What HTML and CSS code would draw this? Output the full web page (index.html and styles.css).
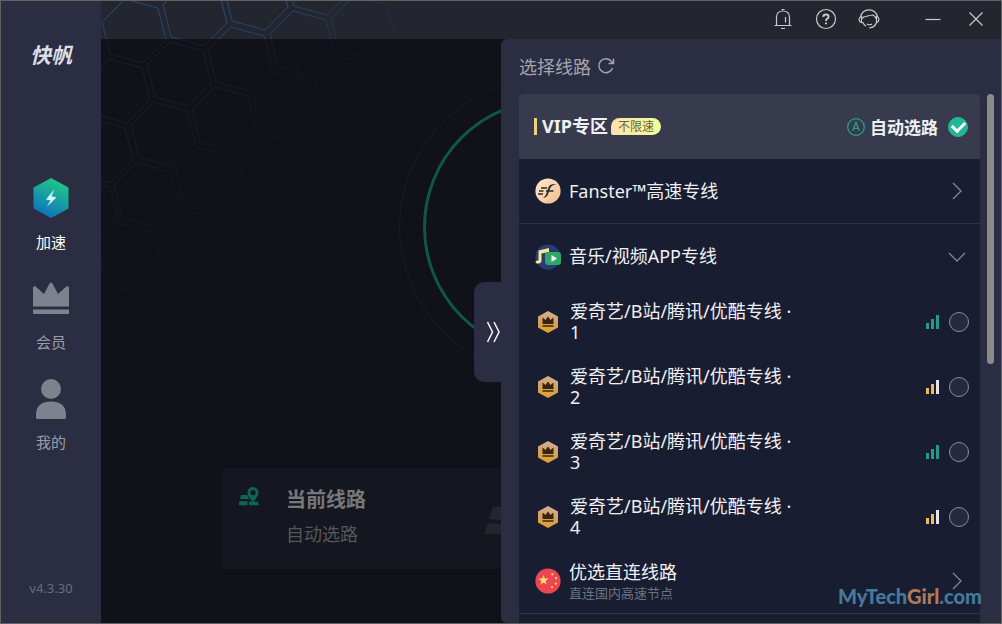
FILE: index.html
```
<!DOCTYPE html>
<html lang="zh-CN">
<head>
<meta charset="utf-8">
<meta name="viewport" content="width=device-width, initial-scale=1">
<title>快帆</title>
<link rel="stylesheet" href="styles.css">
</head>
<body>
<div class="window">
  <aside class="sidebar">
    <div class="logo">快帆</div>
    <nav class="nav">
      <button class="nav-item active" type="button">
        <svg class="nav-icon" viewBox="0 0 40 44">
          <defs><linearGradient id="hex" x1="0.7" y1="0" x2="0.3" y2="1"><stop offset="0" stop-color="#1fcb87"/><stop offset="0.5" stop-color="#189ea0"/><stop offset="1" stop-color="#0e6cc4"/></linearGradient></defs>
          <path d="M20 3 37.500 12.500v21L20 43 2.500 33.500v-21z" fill="url(#hex)"/>
          <path d="M23.500 14 15 24.500l4.500.8-3.500 6.200 9.500-9-5-1.200z" fill="#d5f3ff"/>
        </svg>
        <span>加速</span>
      </button>
      <button class="nav-item" type="button">
        <svg class="nav-icon" viewBox="0 0 40 44" fill="#7e818e">
          <path d="M2 12l2-1 9 8 5.500-10.500q1.500-2 3 0L27 19l9-8 2 1v19.500H2zM2 34.500h36V38q0 1-1 1H3q-1 0-1-1z"/>
        </svg>
        <span>会员</span>
      </button>
      <button class="nav-item" type="button">
        <svg class="nav-icon" viewBox="0 0 40 44" fill="#7e818e">
          <circle cx="20" cy="14" r="10"/><path d="M5 42Q4 26.500 20 26.500T35 42q0 2-1 2H6q-1 0-1-2z"/>
        </svg>
        <span>我的</span>
      </button>
    </nav>
    <div class="version">v4.3.30</div>
  </aside>

  <main class="main">
    <header class="titlebar">
      <button type="button" aria-label="通知"><svg viewBox="0 0 22 22"><path d="M2.500 17.500h17M4.500 17.500V9.500q0-6.500 6.500-6.500t6.500 6.500v8M9.500 1.500h3M9 20.500h4M13.500 9v5.500"/></svg></button>
      <button type="button" aria-label="帮助"><svg viewBox="0 0 22 22"><circle cx="11" cy="11" r="9.500"/><path stroke-width="2" d="M8.300 8.800Q8.500 6.500 11 6.500t2.500 2.200Q13.500 10 12 10.800 11 11.300 11 13M11 14.500v1.800"/></svg></button>
      <button type="button" aria-label="客服"><svg viewBox="0 0 22 22"><path d="M2.500 9Q4 1.800 11 1.800T19.500 9M3.500 8.500H3Q1 9.500 1 11.500T3.500 14.500zM18.500 8.500h.5q2 1 2 3t-2.500 3zM4.500 10.500Q5 8.500 8 8.500 13 7 15 7q2 1 3 3.500M4.500 14Q6 17 8 18.300M18.500 14.500q-1.500 5-7.500 5.500M9 16q2.500 1.500 5 0"/></svg></button>
      <button class="minimize" type="button" aria-label="最小化"><svg viewBox="0 0 22 22"><path d="M3.500 11.500h15"/></svg></button>
      <button type="button" aria-label="关闭"><svg viewBox="0 0 22 22"><path d="M4.500 4.500l13 13M17.500 4.500l-13 13"/></svg></button>
    </header>

    <svg class="honeycomb" viewBox="0 0 320 340">
      <defs>
        <path id="cell" d="M-32-9-9-32 24-23 32 9 9 32-24 23z"/>
        <linearGradient id="fade" gradientUnits="userSpaceOnUse" x1="90" y1="90" x2="172" y2="172"><stop offset="0" stop-color="#fff"/><stop offset="1" stop-color="#000"/></linearGradient>
        <linearGradient id="tint" gradientUnits="userSpaceOnUse" x1="0" y1="0" x2="0" y2="340"><stop offset="0" stop-color="#2b4b7a"/><stop offset="0.111" stop-color="#264266"/><stop offset="0.112" stop-color="#14202b"/><stop offset="1" stop-color="#122226"/></linearGradient>
        <mask id="fade-mask" maskUnits="userSpaceOnUse" x="0" y="0" width="320" height="340">
          <rect width="320" height="340" fill="url(#fade)"/>
        </mask>
        <mask id="cells" maskUnits="userSpaceOnUse" x="0" y="0" width="320" height="340"><g fill="none" stroke="#fff">
          <use href="#cell" x="33" y="30"/><use href="#cell" x="94" y="13"/><use href="#cell" x="155" y="-3"/><use href="#cell" x="217" y="-18"/>
          <use href="#cell" x="17" y="90"/><use href="#cell" x="78" y="73"/><use href="#cell" x="139" y="58"/><use href="#cell" x="201" y="42"/><use href="#cell" x="262" y="27"/>
          <use href="#cell" x="0" y="150"/><use href="#cell" x="62" y="133"/><use href="#cell" x="123" y="118"/><use href="#cell" x="184" y="103"/><use href="#cell" x="245" y="87"/>
          <use href="#cell" x="-15" y="209"/><use href="#cell" x="45" y="194"/><use href="#cell" x="107" y="179"/><use href="#cell" x="168" y="163"/>
          <use href="#cell" x="-32" y="270"/><use href="#cell" x="29" y="255"/><use href="#cell" x="90" y="240"/><use href="#cell" x="13" y="315"/>
        </g></mask>
      </defs>
      <g mask="url(#fade-mask)"><rect width="320" height="340" fill="url(#tint)" mask="url(#cells)"/></g>
    </svg>

    <section class="stage">
      <div class="ring-outer"><div class="ring"></div></div>
      <div class="route-card">
        <svg class="route-icon" viewBox="0 0 22 20" fill="#0f6453">
          <path d="M3 8h6.500q.5 2.500 2 4.300L2 12zM1.500 14l8 .3v4H1zM11 14.500l9 .2 1 3.600H11z"/>
          <path fill-rule="evenodd" d="M15 0q5.500.5 5.500 5.500Q20.500 9.500 15 15 9.500 9.500 9.500 5.500 9.500.5 15 0zm0 3a2.600 2.600 0 1 0 .1 0z"/>
        </svg>
        <div class="route-text">
          <strong>当前线路</strong>
          <span>自动选路</span>
        </div>
        <svg class="route-art" viewBox="0 0 76 40" fill="#24262e"><path d="M9 11h34v15L5 23zM4 27l39 4v7H0zM47 11h20l4 15H47zM47 31h25l4 7H47z"/></svg>
      </div>
    </section>
  </main>

  <section class="drawer">
    <button class="handle" type="button" aria-label="收起"><svg viewBox="0 0 14 22"><path d="M1.500 1l5 10-5 10M8 1l5 10-5 10"/></svg></button>
    <div class="drawer-title">
      <h2>选择线路</h2>
      <button type="button" aria-label="刷新"><svg viewBox="0 0 18 18"><path d="M15.500 11A7 7 0 1 1 14.500 4.500L16 6.500M16.500 1.500v5h-5"/></svg></button>
    </div>
    <div class="scroller">
      <div class="list">
        <div class="row vip">
          <h3>VIP专区</h3>
          <span class="badge">不限速</span>
          <label class="auto" for="auto">
            <svg viewBox="0 0 18 18"><circle cx="9" cy="9" r="8.300"/><path d="M5.500 13 9 4.500 12.500 13M7 10.300h4"/></svg>
            自动选路
          </label>
          <input class="pick" type="radio" name="route" id="auto" checked>
        </div>
        <button class="row line" type="button">
          <svg class="round" viewBox="0 0 26 26">
            <defs><linearGradient id="peach" x1="0" y1="0" x2="1" y2="1"><stop offset="0" stop-color="#ffe9ce"/><stop offset="1" stop-color="#edbd8b"/></linearGradient></defs>
            <circle cx="13" cy="13" r="12.600" fill="url(#peach)"/>
            <path d="M11 13h7.500M6 10h6M4 13h4.500M3 16h5" fill="none" stroke="#302a26" stroke-width="1.300"/>
            <path d="M21.500 6q-7-.8-8.300 4l-1.800 5.500q-1 3-3.400 4.500 4-.5 5.400-4.500l1.900-5.500q1-2.500 6.200-4z" fill="#302a26"/>
          </svg>
          <span class="name">Fanster™高速专线</span>
          <svg class="arrow" viewBox="0 0 18 18"><path d="M5 1l8 8-8 8"/></svg>
        </button>
        <button class="row" type="button">
          <svg class="round" viewBox="0 0 26 26">
            <circle cx="13" cy="13" r="12.600" fill="#273b7a"/>
            <path d="M3.500 16.500V6.500L14 4v4L6.500 9.500v7q0 3-3 3T.500 18q.5-2 3-1.500z" fill="#f8e78c"/>
            <rect x="10" y="8" width="16" height="13" rx="3" fill="#2fa866"/><path d="M16.500 11v7l5.500-3.500z" fill="#fff"/>
          </svg>
          <span class="name">音乐/视频APP专线</span>
          <svg class="arrow" viewBox="0 0 18 18"><path d="M1 5l8 8 8-8"/></svg>
        </button>
        <div class="row">
          <svg class="round" viewBox="0 0 26 26">
            <defs>
              <linearGradient id="gold" x1="0.6" y1="0" x2="0.4" y2="1"><stop offset="0" stop-color="#d3b193"/><stop offset="0.5" stop-color="#d0a263"/><stop offset="1" stop-color="#e3a125"/></linearGradient>
              <g id="crown"><path d="M13 2 23 7.500v11L13 24 3 18.500v-11z" fill="url(#gold)"/><path d="M7.500 8.500l3 2.500L13 7.500l2.500 3.500 3-2.500V15h-11zM7.500 16.300h11v1.400h-11z" fill="#3a2410"/></g>
            </defs>
            <use href="#crown"/>
          </svg>
          <label class="name sub" for="r1">爱奇艺/B站/腾讯/优酷专线 · 1</label>
          <span class="signal good"><i></i><i></i><i></i></span>
          <input class="pick" type="radio" name="route" id="r1">
        </div>
        <div class="row">
          <svg class="round" viewBox="0 0 26 26"><use href="#crown"/></svg>
          <label class="name sub" for="r2">爱奇艺/B站/腾讯/优酷专线 · 2</label>
          <span class="signal"><i></i><i></i><i></i></span>
          <input class="pick" type="radio" name="route" id="r2">
        </div>
        <div class="row">
          <svg class="round" viewBox="0 0 26 26"><use href="#crown"/></svg>
          <label class="name sub" for="r3">爱奇艺/B站/腾讯/优酷专线 · 3</label>
          <span class="signal good"><i></i><i></i><i></i></span>
          <input class="pick" type="radio" name="route" id="r3">
        </div>
        <div class="row">
          <svg class="round" viewBox="0 0 26 26"><use href="#crown"/></svg>
          <label class="name sub" for="r4">爱奇艺/B站/腾讯/优酷专线 · 4</label>
          <span class="signal"><i></i><i></i><i></i></span>
          <input class="pick" type="radio" name="route" id="r4">
        </div>
        <button class="row line" type="button">
          <svg class="round" viewBox="0 0 26 26">
            <circle cx="13" cy="13" r="12.600" fill="#ee4650"/>
            <path d="M8.500 7l1.300 3.500 3.700.1-2.900 2.300 1 3.600-3.100-2.100-3.100 2.100 1-3.600-2.900-2.300 3.700-.1z" fill="#ffdf72"/>
            <path d="M16 6l2-1 .5 2-1.500.5zM20 9.500l2-.8v2.300l-1.500.3zM19.500 15l2-.5.300 2-1.600.2zM16 18.500l2-.5-.3 2.200-1.700-.2z" fill="#ffdf72"/>
          </svg>
          <span class="name double">优选直连线路<small>直连国内高速节点</small></span>
          <svg class="arrow" viewBox="0 0 18 18"><path d="M5 1l8 8-8 8"/></svg>
        </button>
      </div>
      <div class="track"><div class="thumb"></div></div>
    </div>
  </section>
  <div class="watermark">MyTech<em>Girl</em>.com</div>
</div>
</body>
</html>
```
FILE: styles.css
```
* { box-sizing: border-box; }

body {
  margin: 0;
  font-family: "Noto Sans", "Noto Sans CJK SC", sans-serif;
  color: #f0f0f4;
}

button {
  padding: 0;
  border: 0;
  background: none;
  color: inherit;
  font: inherit;
}

h2, h3 { margin: 0; }

svg { display: block; flex: none; }

.window {
  position: relative;
  display: flex;
  height: 100vh;
  overflow: hidden;
  border: 1px solid #62635f;
  background: #111219;
}

.sidebar {
  display: flex;
  flex: none;
  flex-direction: column;
  width: 100px;
  padding: 38px 0 23px;
  background: #2b2e42;
  text-align: center;
}

.logo {
  color: #dcdde4;
  font-size: 21px;
  font-style: italic;
  font-weight: 700;
  line-height: 32px;
}

.nav {
  display: flex;
  flex: 1;
  flex-direction: column;
  padding-top: 104px;
}

.nav-item {
  display: flex;
  flex-direction: column;
  align-items: center;
  gap: 12px;
  height: 100px;
  color: #9a9ca7;
  font-size: 15px;
  line-height: 22px;
}

.nav-item.active { color: #fff; }

.nav-icon { width: 40px; height: 44px; }

.version {
  color: #696c7a;
  font-size: 13px;
  line-height: 24px;
}

.main {
  position: relative;
  flex: 1;
  min-width: 0;
}

.titlebar {
  display: flex;
  justify-content: flex-end;
  height: 38px;
  padding: 0 4px 2px 0;
  background: #23262f;
}

.titlebar button {
  display: grid;
  place-items: center;
  width: 43px;
}

.titlebar .minimize { margin-left: 21px; }

.titlebar svg {
  width: 22px;
  height: 22px;
  fill: none;
  stroke: #c9cacd;
  stroke-width: 1.2;
}

.honeycomb {
  position: absolute;
  top: 0;
  left: 0;
  width: 320px;
  height: 340px;
}

.stage {
  display: flex;
  flex-direction: column;
  gap: 91px;
  padding: 38px 121px 0;
}

.ring-outer {
  display: grid;
  place-items: center;
  align-self: center;
  width: 304px;
  height: 300px;
  border: 1px solid #111f24;
  border-radius: 50%;
}

.ring {
  width: 256px;
  height: 256px;
  border: 3px solid #0d5847;
  border-radius: 50%;
}

.route-card {
  display: flex;
  align-items: flex-start;
  height: 101px;
  padding: 16px 260px 0 16px;
  border-radius: 4px;
  background: #151720;
}

.route-icon { width: 22px; height: 20px; margin-top: 3px; }

.route-text {
  display: flex;
  flex: 1;
  flex-direction: column;
  gap: 2px;
  padding-left: 26px;
  color: #55565b;
  font-size: 18px;
  line-height: 32px;
}

.route-text strong { color: #77787a; font-size: 20px; }

.route-art { width: 76px; height: 40px; margin: 12px 60px 0 0; }

.drawer {
  position: absolute;
  top: 38px;
  right: 0;
  bottom: 0;
  display: flex;
  flex-direction: column;
  width: 50%;
  padding-left: 18px;
  border-radius: 6px 0 0 6px;
  background: #2b2e42;
}

.handle {
  position: absolute;
  top: 243px;
  left: -27px;
  display: grid;
  place-items: center;
  width: 28px;
  height: 100px;
  padding-left: 10px;
  border-radius: 10px 0 0 10px;
  background: #2b2e42;
}

.handle svg {
  width: 14px;
  height: 22px;
  fill: none;
  stroke: #f0f0f4;
  stroke-width: 1.6;
}

.drawer-title {
  display: flex;
  flex: none;
  align-items: center;
  gap: 6px;
  height: 55px;
  padding-bottom: 2px;
}

.drawer-title h2 {
  color: #a3a4af;
  font-size: 18px;
  font-weight: 400;
}

.drawer-title svg {
  width: 18px;
  height: 18px;
  fill: none;
  stroke: #a3a4af;
  stroke-width: 1.5;
}

.scroller {
  display: flex;
  flex: 1;
  min-height: 0;
  overflow: hidden;
}

.list {
  flex: 1;
  border-radius: 4px 4px 0 0;
  background: #191d31;
  overflow: hidden;
}

.row {
  display: flex;
  align-items: center;
  width: 100%;
  height: 65px;
  padding: 0 11px 0 16px;
  text-align: left;
}

.line { border-bottom: 1px solid #303346; }

.vip {
  padding-right: 12px;
  padding-left: 15px;
  background: #383b4e;
}

.vip h3 {
  padding-left: 5px;
  border-left: 3px solid #f3cd80;
  font-size: 18px;
  line-height: 17px;
}

.badge {
  margin-left: 3px;
  padding: 0 7px;
  border-radius: 9px 9px 9px 2px;
  background: linear-gradient(90deg, #ffdfae, #f3ff95);
  color: #646745;
  font-size: 12px;
  line-height: 17px;
}

.auto {
  display: flex;
  align-items: center;
  gap: 5px;
  margin-left: auto;
  font-size: 17px;
  font-weight: 700;
}

.auto svg {
  width: 18px;
  height: 18px;
  fill: none;
  stroke: #20a58c;
  stroke-width: 1.3;
}

.pick {
  display: grid;
  flex: none;
  place-items: center;
  width: 20px;
  height: 20px;
  margin: 0 0 0 10px;
  border: 1px solid #8c8e9a;
  border-radius: 50%;
  background: #262a3e;
  appearance: none;
}

.pick:checked {
  border-color: #21b795;
  background: #21b795;
}

.pick:checked::after {
  width: 10px;
  height: 6px;
  margin-bottom: 3px;
  border: solid #fff;
  border-width: 0 0 3px 3px;
  content: "";
  transform: rotate(-45deg);
}

.round { width: 26px; height: 26px; }

.name {
  display: block;
  flex: 1;
  padding-left: 8px;
  font-size: 18px;
  line-height: 21px;
}

.name.sub {
  flex: none;
  width: 240px;
  padding-left: 9px;
}

.name.double { padding-top: 4px; }

.name small {
  display: block;
  color: #6f7282;
  font-size: 13px;
}

.arrow {
  width: 18px;
  height: 18px;
  margin-right: 3px;
  fill: none;
  stroke: #85878f;
  stroke-width: 1.3;
}

.signal {
  display: flex;
  align-items: flex-end;
  gap: 2px;
  margin-left: auto;
}

.signal i {
  width: 3px;
  height: 14px;
  background: #e4e5e8;
}

.signal i:nth-child(1) { height: 6px; background: #f0b95e; }
.signal i:nth-child(2) { height: 10px; background: #f0b95e; }
.signal.good i { background: #229c87; }

.track {
  flex: none;
  width: 21px;
  padding: 0 7px;
}

.thumb {
  height: 270px;
  border-radius: 4px;
  background: #8b8b8b;
}

.watermark {
  position: absolute;
  right: 19px;
  bottom: 12px;
  color: #457a9b;
  font-family: Lato, sans-serif;
  font-size: 20px;
  font-weight: 900;
  line-height: 30px;
}

.watermark em { color: #ad7a5d; font-style: normal; }
```
